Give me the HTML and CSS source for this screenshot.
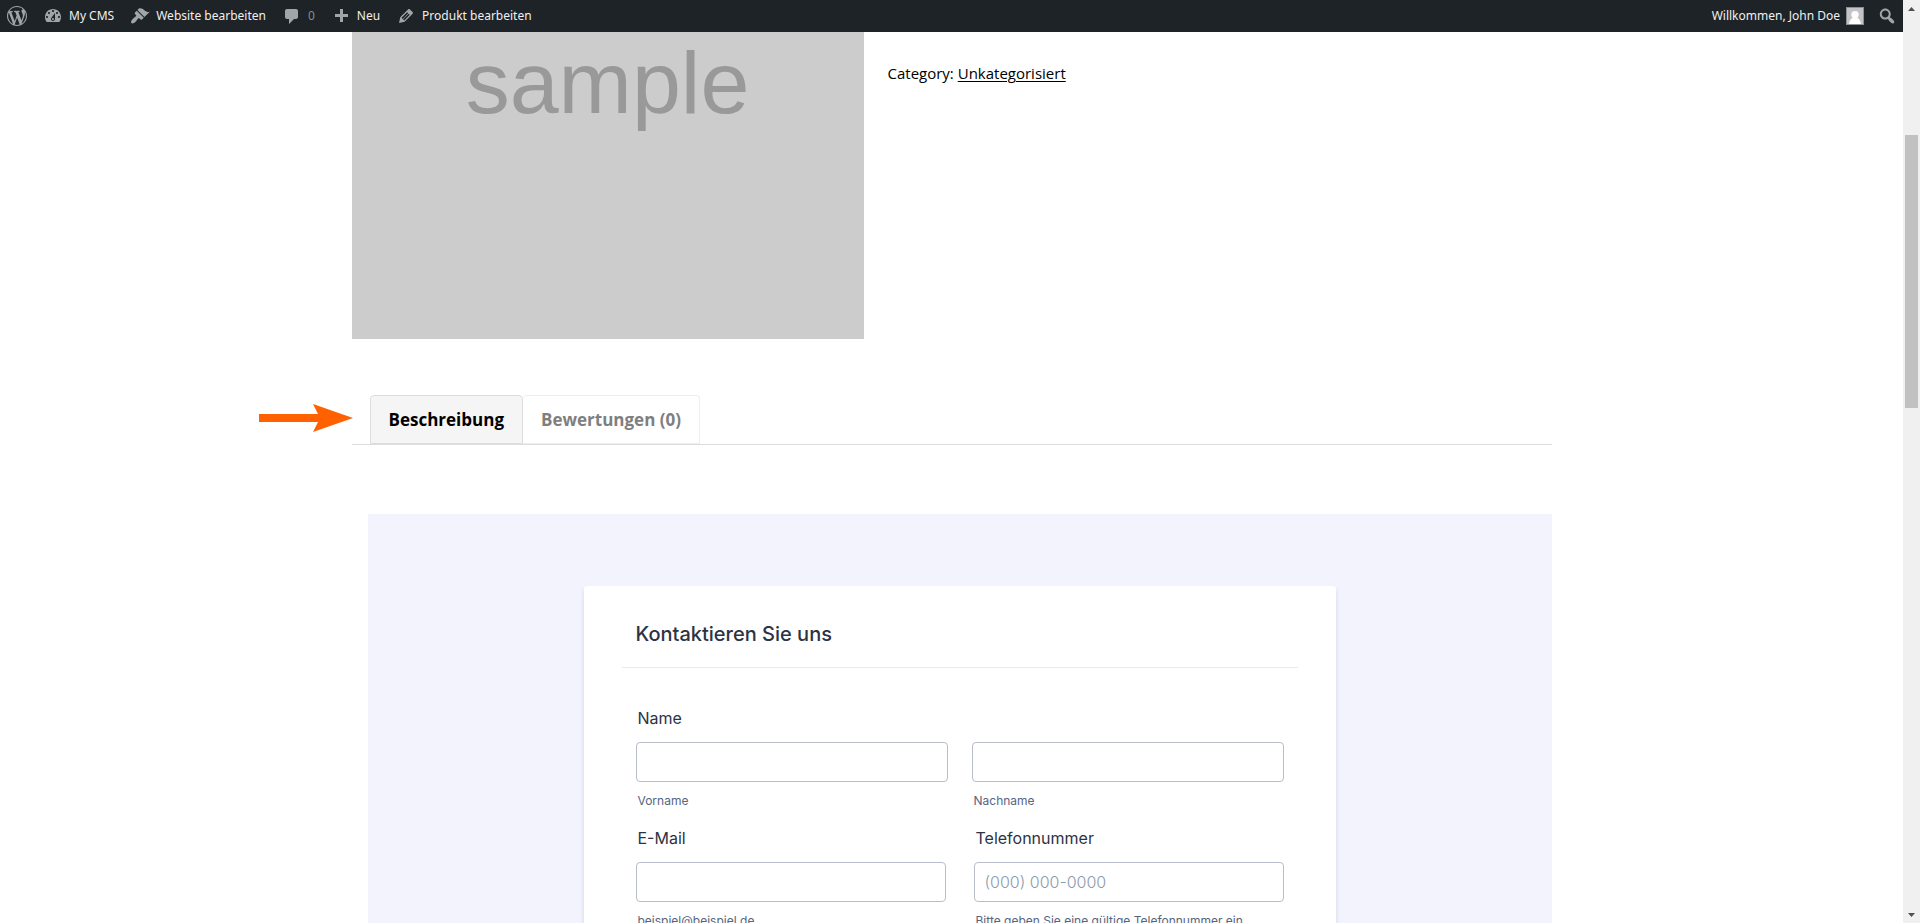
FILE: index.html
```html
<!DOCTYPE html>
<html lang="de">
<head>
<meta charset="UTF-8">
<title>Produkt – My CMS</title>

<meta name="viewport" content="width=device-width, initial-scale=1">

<link rel="stylesheet" href="styles.css">
</head>

<body>

<div class="page">

<header class="adminbar">
<nav class="bar-group">
<a href="#" class="bar-item" aria-label="WordPress">
<svg class="icon" viewBox="0 0 20 20"><path d="M20 10c0-5.51-4.49-10-10-10S0 4.49 0 10s4.48 10 10 10 10-4.49 10-10zM7.78 15.37L4.37 6.22c.55-.02 1.17-.08 1.17-.08.5-.06.44-1.13-.06-1.11 0 0-1.45.11-2.37.11-.18 0-.37 0-.58-.01C4.12 2.69 6.87 1.11 10 1.11c2.33 0 4.45.87 6.05 2.34-.68-.11-1.65.39-1.65 1.58 0 .74.45 1.36.9 2.1.35.61.55 1.36.55 2.46 0 1.49-1.4 5-1.4 5l-3.03-8.37c.54-.02.82-.17.82-.17.5-.05.44-1.25-.06-1.22 0 0-1.44.12-2.38.12-.87 0-2.33-.12-2.33-.12-.5-.03-.56 1.2-.06 1.22l.92.08 1.26 3.41zM17.41 10c.24-.64.74-1.87.43-4.25.7 1.29 1.05 2.71 1.05 4.25 0 3.29-1.73 6.24-4.4 7.78.97-2.59 1.94-5.2 2.92-7.78zM6.1 18.09C3.12 16.65 1.11 13.53 1.11 10c0-1.3.23-2.48.72-3.59C3.25 10.3 4.67 14.2 6.1 18.09zm4.03-6.63l2.58 6.98c-.86.29-1.76.45-2.71.45-.79 0-1.57-.11-2.29-.33.81-2.38 1.62-4.74 2.42-7.1z"/></svg>
</a>
<a href="#" class="bar-item">
<svg class="icon" viewBox="0 0 20 20"><path d="M3.76 16h12.48c1.1-1.37 1.76-3.11 1.76-5 0-4.42-3.58-8-8-8s-8 3.58-8 8c0 1.89.66 3.63 1.76 5zM10 4c.55 0 1 .45 1 1s-.45 1-1 1-1-.45-1-1 .45-1 1-1zM6 6c.55 0 1 .45 1 1s-.45 1-1 1-1-.45-1-1 .45-1 1-1zm8 0c.55 0 1 .45 1 1s-.45 1-1 1-1-.45-1-1 .45-1 1-1zm-5.37 5.55L12 7v6c0 1.1-.9 2-2 2s-2-.9-2-2c0-.57.24-1.08.63-1.45zM4 10c.55 0 1 .45 1 1s-.45 1-1 1-1-.45-1-1 .45-1 1-1zm12 0c.55 0 1 .45 1 1s-.45 1-1 1-1-.45-1-1 .45-1 1-1zm-5 3c0-.55-.45-1-1-1s-1 .45-1 1 .45 1 1 1 1-.45 1-1z"/></svg>
<span>My CMS</span>
</a>
<a href="#" class="bar-item">
<svg class="icon" viewBox="0 0 20 20"><path d="M14.48 11.06L7.41 3.99l1.5-1.5c.5-.56 2.3-.47 3.51.32 1.21.8 1.43 1.28 2.91 2.1 1.18.64 2.45 1.26 4.45.85zm-.71.71L6.7 4.7 4.93 6.47c-.39.39-.39 1.02 0 1.41l1.06 1.06c.39.39.39 1.03 0 1.42-.6.6-1.43 1.11-2.21 1.69-.35.26-.7.53-1.01.84C1.43 14.23.4 16.08 1.4 17.07c.99 1 2.84-.03 4.18-1.36.31-.31.58-.66.85-1.02.57-.78 1.08-1.61 1.69-2.21.39-.39 1.02-.39 1.41 0l1.06 1.06c.39.39 1.02.39 1.41 0z"/></svg>
<span>Website bearbeiten</span>
</a>
<a href="#" class="bar-item">
<svg class="icon" viewBox="0 0 20 20"><path d="M5 3h9c1.100 0 2 .9 2 2v6c0 1.100-.9 2-2 2h-2l-5 5v-5H5c-1.100 0-2-.9-2-2V5c0-1.100.9-2 2-2z"/></svg>
<span class="count">0</span>
</a>
<a href="#" class="bar-item">
<svg class="icon" viewBox="0 0 20 20"><path d="M17 8v3h-5v5H9v-5H4V8h5V3h3v5h5z"/></svg>
<span>Neu</span>
</a>
<a href="#" class="bar-item">
<svg class="icon" viewBox="0 0 20 20"><path d="M13.89 3.39l2.71 2.72c.46.46.42 1.24.03 1.64l-8.01 8.02-5.56 1.16 1.16-5.58s7.6-7.63 7.99-8.03c.39-.39 1.22-.39 1.68.07zm-2.73 2.79l-5.59 5.61 1.11 1.11 5.54-5.65zm-2.97 8.23l5.58-5.6-1.07-1.08-5.59 5.6z"/></svg>
<span>Produkt bearbeiten</span>
</a>
</nav>
<nav class="bar-group account">
<a href="#" class="bar-item">
<span>Willkommen, John Doe</span>
<svg class="avatar" viewBox="0 0 16 16"><path d="M8 3a3.700 3.700 0 0 1 3.700 3.700c0 1.400-.7 2.500-1.600 3.100 2 .8 3.400 3 3.900 6.200H2c.5-3.200 1.900-5.400 3.900-6.200-.9-.6-1.600-1.700-1.600-3.100A3.700 3.700 0 0 1 8 3z"/></svg>
</a>
<a href="#" class="bar-item" aria-label="Suchen">
<svg class="icon" viewBox="0 0 20 20"><path d="M12.14 4.18c1.87 1.87 2.11 4.75.72 6.89.12.1.22.21.36.31.2.16.47.36.81.59.34.24.56.39.66.47.42.31.73.57.94.78.32.32.6.65.84 1 .25.35.44.69.59 1.04.14.35.21.68.18 1-.02.32-.14.59-.36.81s-.49.34-.81.36c-.31.02-.65-.04-.99-.19-.35-.14-.7-.34-1.04-.59-.35-.24-.68-.52-1-.84-.21-.21-.47-.52-.77-.93-.1-.13-.25-.35-.47-.66-.22-.32-.4-.57-.56-.78-.16-.2-.29-.35-.44-.5-2.07 1.09-4.69.76-6.44-.98-2.14-2.15-2.14-5.64 0-7.78 2.15-2.15 5.63-2.15 7.78 0zm-1.41 6.36c1.36-1.37 1.36-3.58 0-4.95-1.37-1.37-3.59-1.37-4.95 0-1.37 1.37-1.37 3.58 0 4.95 1.36 1.37 3.58 1.37 4.95 0z"/></svg>
</a>
</nav>
</header>

<main class="content">

<section class="product">
<div class="product-image">sample</div>
<div class="product-meta">Category: <a href="#">Unkategorisiert</a></div>
</section>

<div class="tabs" role="tablist">
<svg class="arrow" viewBox="0 0 94 28"><path d="M0 10h59L54 0l40 14-40 14 5-10H0z"/></svg>
<button class="tab active" role="tab" aria-selected="true">Beschreibung</button>
<button class="tab" role="tab" aria-selected="false">Bewertungen (0)</button>
</div>

<section class="panel">
<form class="card">

<h2>Kontaktieren Sie uns</h2>

<div class="label">Name</div>
<div class="row name-row">
<div class="field">
<input type="text" id="first">
<label class="sub" for="first">Vorname</label>
</div>
<div class="field">
<input type="text" id="last">
<label class="sub" for="last">Nachname</label>
</div>
</div>

<div class="row contact-row">
<div class="field">
<label class="label" for="email">E-Mail</label>
<input type="email" id="email">
<span class="sub">beispiel@beispiel.de</span>
</div>
<div class="field">
<label class="label" for="phone">Telefonnummer</label>
<input type="tel" id="phone" placeholder="(000) 000-0000">
<span class="sub">Bitte geben Sie eine gültige Telefonnummer ein.</span>
</div>
</div>

</form>
</section>

</main>
</div>

<div class="scrollbar">
<svg viewBox="0 0 17 17"><path d="M5 11l3.500-4 3.500 4z"/></svg>
<div class="track"><div class="thumb"></div></div>
<svg viewBox="0 0 17 17"><path d="M5 7l3.500 4L12 7z"/></svg>
</div>

</body>
</html>
```

FILE: styles.css
```css
*{
box-sizing:border-box;
}

body{
margin:0;
height:100vh;
display:flex;
overflow:hidden;
background:#fff;
font-family:"Open Sans","Noto Sans",sans-serif;
color:#000;
}

.page{
flex:1;
min-width:0;
overflow:hidden;
}

/* admin bar */
.adminbar{
display:flex;
justify-content:space-between;
height:32px;
background:#1d2327;
font-family:"Noto Sans",sans-serif;
font-size:12px;
line-height:32px;
}

.bar-group{
display:flex;
}

.bar-item{
display:flex;
align-items:center;
gap:6px;
padding:0 9px 0 7px;
color:#f0f0f1;
text-decoration:none;
white-space:nowrap;
}

.account .bar-item{
padding-right:6px;
}

.icon{
width:20px;
height:20px;
fill:#a0a5aa;
}

.count{
color:#888c90;
}

.avatar{
width:18px;
height:18px;
border:1px solid #8c8f94;
background:#c3c4c7;
fill:#fff;
}

/* product */
.content{
max-width:1200px;
margin:0 auto;
}

.product{
display:flex;
gap:24px;
}

.product-image{
width:512px;
height:307px;
background:#ccc;
color:#999;
font-family:"Liberation Sans",Arial,sans-serif;
font-size:88px;
line-height:102px;
text-align:center;
}

.product-meta{
padding-top:29px;
font-size:15px;
line-height:24px;
}

.product-meta a{
color:#000;
text-underline-offset:2px;
}

/* tabs */
.tabs{
position:relative;
display:flex;
margin-top:56px;
padding-left:18px;
border-bottom:1px solid #ddd;
}

.arrow{
position:absolute;
left:-93px;
top:9px;
width:94px;
height:28px;
fill:#ff6100;
}

.tab{
height:49px;
padding:0 18px;
border:1px solid #eee;
border-left:0;
border-radius:4px 4px 0 0;
background:#fff;
color:#7f7f7f;
font-family:inherit;
font-size:17px;
font-weight:bold;
}

.tab.active{
border:1px solid #ddd;
background:#f5f5f5;
color:#000;
}

/* form */
.panel{
margin:69px 0 0 16px;
padding:72px 16px 0;
background:#f3f3fe;
font-family:Inter,sans-serif;
color:#2c3345;
}

.card{
max-width:752px;
margin:0 auto;
padding:0 52px 40px;
border-radius:3px;
background:#fff;
box-shadow:0 4px 4px rgba(87,100,126,.21);
}

.card h2{
margin:0 -14px 40px;
padding:36px 14px 21px;
border-bottom:1px solid #e9eaec;
font-size:20px;
font-weight:500;
line-height:24px;
}

.label{
display:block;
padding-left:2px;
margin-bottom:14px;
font-size:16px;
line-height:20px;
}

.row{
display:grid;
grid-template-columns:1fr 1fr;
}

.name-row{
gap:24px;
margin-bottom:19px;
}

.contact-row{
gap:28px;
}

.field input{
display:block;
width:100%;
height:40px;
margin-bottom:11px;
padding:0 10px;
border:1px solid #b8bdc9;
border-radius:4px;
background:#fff;
font-family:inherit;
font-size:16px;
}

.field input::placeholder{
color:#8d9aae;
font-weight:300;
}

.sub{
display:block;
padding-left:2px;
color:#57647e;
font-size:12px;
line-height:16px;
}

/* scrollbar */
.scrollbar{
display:flex;
flex-direction:column;
width:17px;
background:#f0f0f0;
}

.scrollbar svg{
width:17px;
height:17px;
fill:#505050;
}

.track{
flex:1;
padding:118px 2px 0;
}

.thumb{
height:273px;
background:#c1c1c1;
}
```
